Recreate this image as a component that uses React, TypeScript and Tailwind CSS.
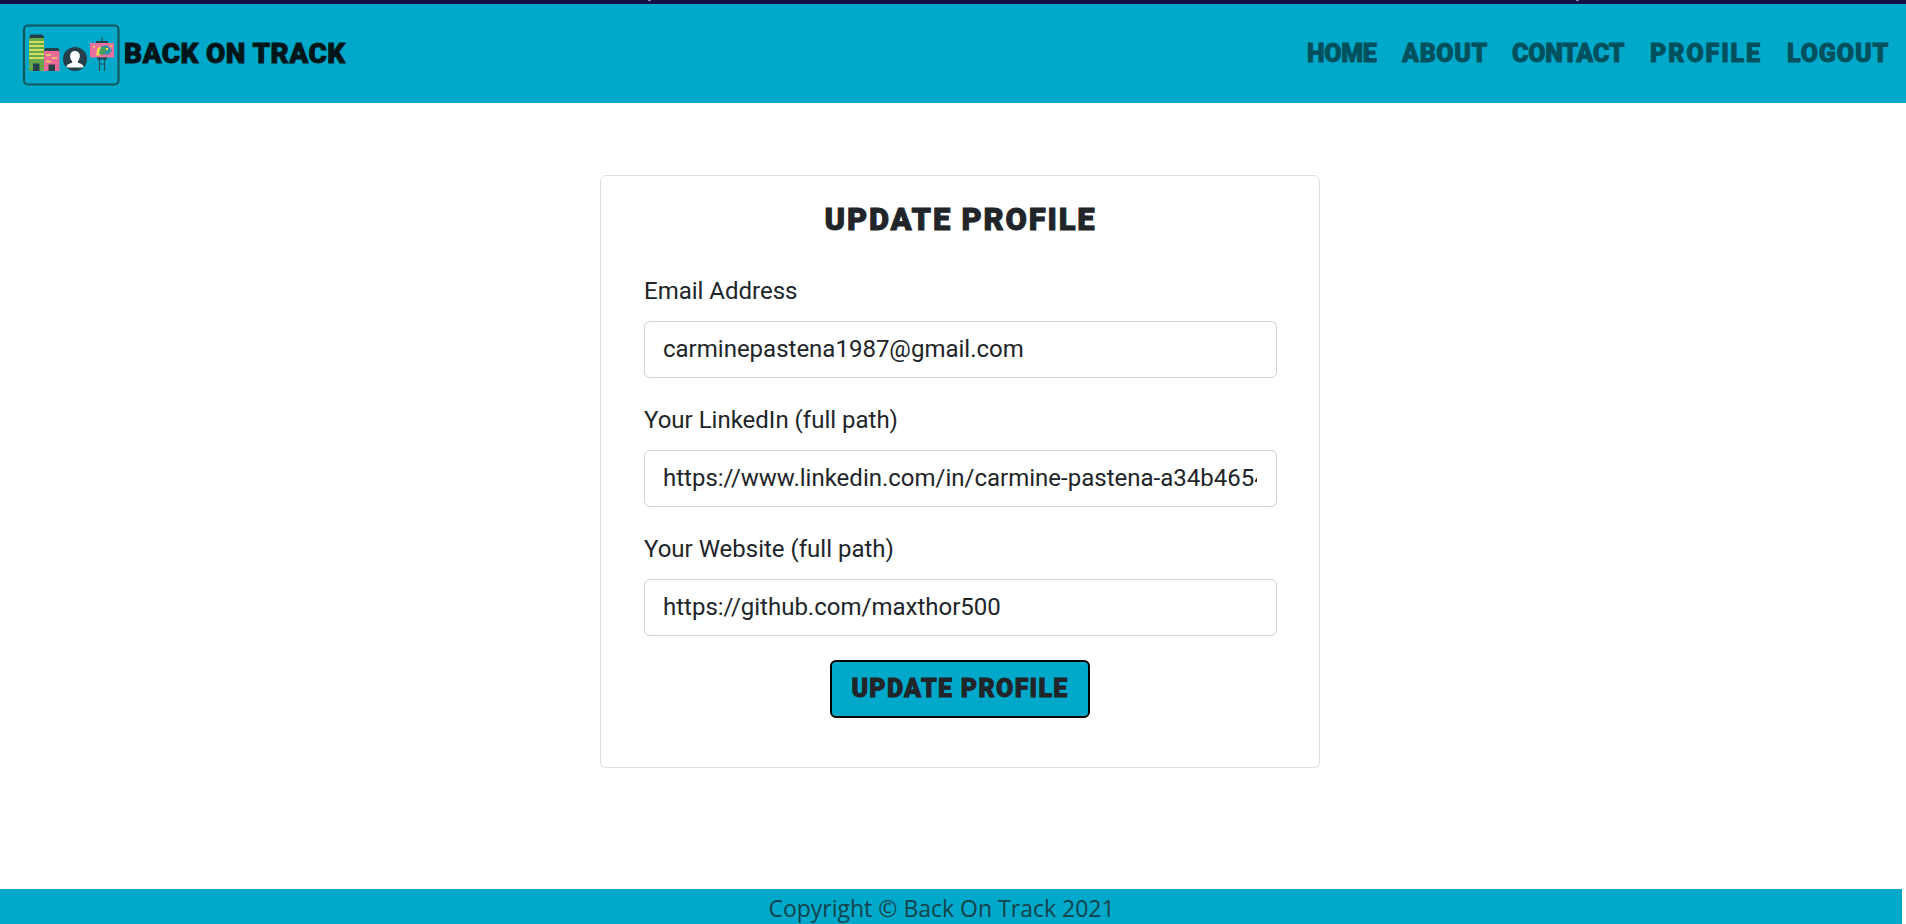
const display =
  "font-[Roboto,sans-serif] font-black uppercase whitespace-nowrap [-webkit-text-stroke:0.9px_currentColor]";

const links = [
  { label: "Home", cls: "w-[70px] tracking-[-0.3px]" },
  { label: "About", cls: "w-[85px] tracking-[0.6px]" },
  { label: "Contact", cls: "w-[113px] tracking-[-0.2px]" },
  { label: "Profile", cls: "w-[112px] tracking-[1.9px]" },
  { label: "Logout", cls: "w-[102px] tracking-[0.9px]" },
];

const fields = [
  { id: "email", label: "Email Address", value: "carminepastena1987@gmail.com" },
  { id: "linkedin", label: "Your LinkedIn (full path)", value: "https://www.linkedin.com/in/carmine-pastena-a34b46546/" },
  { id: "website", label: "Your Website (full path)", value: "https://github.com/maxthor500" },
];

function Logo() {
  return (
    <svg viewBox="0 0 98 62" className="mt-[2px] h-[62px] w-[98px] shrink-0">
      <rect x="2" y="1.5" width="94.500" height="59" rx="4" fill="none" stroke="#145660" strokeWidth="2.200" />
      <path d="M8.500 10.500h12l2 3.500H7z" fill="#26404b" />
      <path d="M7 14h15v33H7z" fill="#65a84c" />
      <path d="M7 18h15M7 22h15M7 26h15M7 30h15M7 34h15" stroke="#f2ee68" strokeWidth="1.500" />
      <path d="M11 39.500h6.500V47H11z" fill="#26404b" />
      <path d="M23 24h13l2 3H22z" fill="#26404b" />
      <path d="M22 27h15.500v20H22z" fill="#ea6b95" />
      <path d="M24 31h5M30 34h5M24 37.500h5" stroke="#f7d66a" strokeWidth="1.500" />
      <path d="M26.500 40.500H33V47h-6.500z" fill="#26404b" />
      <circle cx="53" cy="35" r="12" fill="#26404b" />
      <path d="M44.500 43.500c0-3 2-3.500 5-4.500 1-.5 1-1.500 0-2.500-2-2.500-2.500-9.500 3.500-9.500s5.500 7 3.500 9.500c-1 1-1 2 0 2.500 3 1 5 1.500 5 4.500z" fill="#fff" />
      <path d="M80 13v5M77.500 33v14M82.500 33v14M77.500 40h5" stroke="#26505b" strokeWidth="1.200" />
      <path d="M74 17h12v2.500H74z" fill="#26404b" />
      <path d="M68 19h24v14.500H68z" fill="#e96f9d" />
      <path d="M75 33.500h10v2H75z" fill="#26404b" />
      <path d="M73 31.500c3 0 0-7 5-9l2 7-3 2z" fill="#f6dc55" />
      <path d="M79 23c4-3 9-1 11 4l-4 4-6-1z" fill="#2d94ae" />
      <path d="M78 25l5-3 2 4-4 5-4-1z" fill="#47a05c" />
      <path d="M84 24h2v2h-2zM88 21.500h2v1.500h-2zM71 22h2v1.500h-2z" fill="#f6dc55" />
    </svg>
  );
}

export default function App() {
  return (
    <div className="flex h-[924px] flex-col overflow-hidden bg-white text-[#212529]">
      <div className="flex h-1 shrink-0 bg-[#140f45]">
        <i className="ml-[648px] h-px w-[3px] bg-[#8d88b5]" />
        <i className="ml-[925px] h-px w-[3px] bg-[#8d88b5]" />
      </div>
      <header className="flex h-[99px] shrink-0 items-center justify-between bg-[#00a9c9] pl-[22px] pr-[17px]">
        <a className="flex items-center gap-[4px]">
          <Logo />
          <span className={`${display} text-[28px] tracking-[0.4px] text-[#001519]`}>Back On Track</span>
        </a>
        <nav className="flex gap-[25px]">
          {links.map((l) => (
            <a key={l.label} className={`${display} text-[25px] leading-[38px] text-[#00505d] ${l.cls}`}>
              {l.label}
            </a>
          ))}
        </nav>
      </header>

      <main className="flex flex-1 justify-center pl-[14px] pt-[72px]">
        <form className="flex h-[593px] w-[720px] flex-col items-center rounded-md border border-[#dfdfdf] pl-[43px] pr-[42px] pt-[24px] font-[Roboto,sans-serif]">
          <h2 className={`${display} h-[73px] text-[31px] leading-[40px] tracking-[1.8px]`}>Update Profile</h2>
          {fields.map((f) => (
            <div key={f.id} className="mb-6 flex w-full flex-col">
              <label htmlFor={f.id} className="mb-3 text-2xl leading-9">{f.label}</label>
              <input
                id={f.id}
                defaultValue={f.value}
                className="h-[57px] w-full rounded-md border border-[#ced0d3] bg-white pb-[2px] pl-[18px] pr-[19px] text-2xl outline-none"
              />
            </div>
          ))}
          <button type="button" className={`${display} mr-px h-[58px] w-[260px] rounded-md border-2 border-black bg-[#00a9c9] text-[25px] tracking-[1.3px]`}>
            Update Profile
          </button>
        </form>
      </main>

      <footer className="mr-1 h-[35px] shrink-0 bg-[#00a9c9] pr-[19px] text-center font-['Open_Sans',sans-serif] text-[23px] leading-[39px] text-[#14434c]">
        Copyright © Back On Track 2021
      </footer>
    </div>
  );
}
